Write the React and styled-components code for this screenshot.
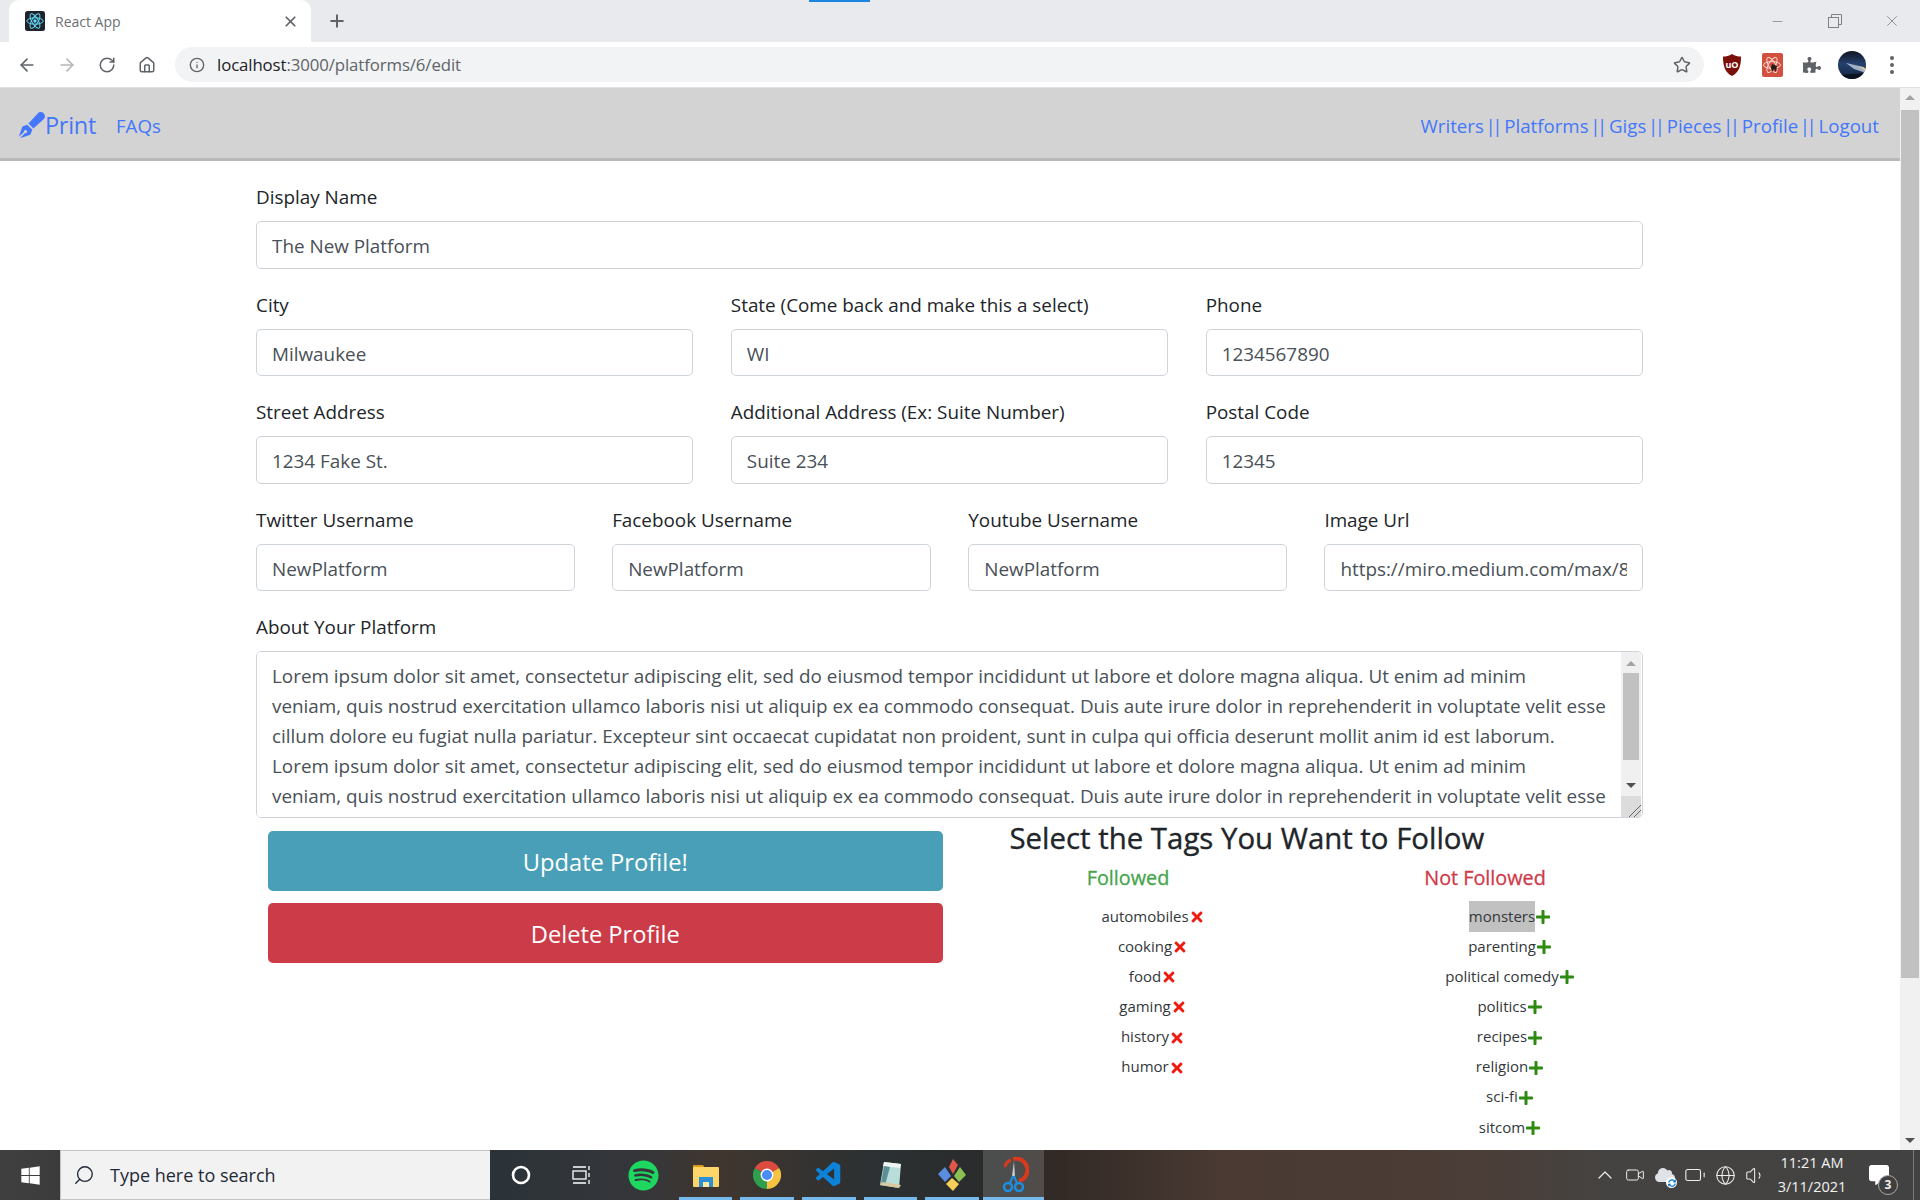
import React from "react";
import styled, { createGlobalStyle } from "styled-components";
import { ArrowLeft, ArrowRight, RotateCw, Home, Info, Star, Plus, X, Minus, Search, ChevronUp, Battery, Globe, Volume1, Video } from "lucide-react";
import { FaPenFancy, FaTimes, FaPlus, FaPuzzlePiece, FaWindows, FaSpotify, FaCloud, FaSyncAlt, FaCommentAlt } from "react-icons/fa";
import { VscVscode } from "react-icons/vsc";

const SANS = `"Open Sans", "Noto Sans", sans-serif`;

const Global = createGlobalStyle`
  html, body { margin: 0; padding: 0; background: #fff; }
  * { box-sizing: border-box; }
  body { font-family: ${SANS}; }
`;

const Screen = styled.div`
  position: relative;
  width: 1920px;
  height: 1200px;
  overflow: hidden;
  display: flex;
  flex-direction: column;
  background: #fff;
`;

/* Browser chrome */
const TabStrip = styled.div`
  position: relative;
  height: 42px;
  flex: none;
  background: #e8eaed;
  display: flex;
  align-items: flex-end;
  padding-left: 9px;
`;
const LoadBar = styled.div`
  position: absolute;
  top: 0;
  left: 809px;
  width: 61px;
  height: 2px;
  background: #1a86e0;
`;
const Tab = styled.div`
  width: 302px;
  height: 42px;
  background: #fff;
  border-radius: 10px 10px 0 0;
  display: flex;
  align-items: center;
  padding: 0 12px 0 16px;
  gap: 10px;
  color: #5f6368;
`;
const TabTitle = styled.span`
  flex: 1;
  font-size: 14px;
  color: #6b6f73;
`;
const NewTab = styled.div`
  width: 52px;
  height: 42px;
  display: flex;
  align-items: center;
  justify-content: center;
  color: #5f6368;
`;
const WindowControls = styled.div`
  margin-left: auto;
  height: 42px;
  display: flex;
  align-items: center;
  color: #7f8184;
`;
const WinBtn = styled.div`
  width: 57px;
  height: 42px;
  display: flex;
  align-items: center;
  justify-content: center;
`;
const Toolbar = styled.div`
  height: 46px;
  flex: none;
  background: #fff;
  border-bottom: 1px solid #dfe1e5;
  display: flex;
  align-items: center;
  padding: 0 8px 0 7px;
`;
const ToolBtn = styled.div`
  width: 40px;
  height: 36px;
  flex: none;
  display: flex;
  align-items: center;
  justify-content: center;
  color: ${p => (p.$dim ? "#b4b6b9" : "#5f6368")};
`;
const Address = styled.div`
  flex: 1;
  height: 35px;
  margin: 0 8px;
  border-radius: 18px;
  background: #f1f3f4;
  display: flex;
  align-items: center;
  padding: 0 13px 0 14px;
  color: #5f6368;
  gap: 12px;
`;
const Url = styled.div`
  flex: 1;
  font-size: 16.8px;
  color: #5f6368;
  letter-spacing: -0.1px;
  & b { font-weight: 400; color: #202124; }
`;

/* Viewport */
const Viewport = styled.div`
  flex: 1;
  min-height: 0;
  display: flex;
`;
const Page = styled.div`
  flex: 1;
  min-width: 0;
  overflow: hidden;
`;
const Navbar = styled.nav`
  height: 73px;
  background: #d3d3d3;
  border-bottom: 3px solid #b9b9b9;
  display: flex;
  align-items: center;
  padding: 4px 21px 0 19px;
  font-size: 18.7px;
  color: #4477fb;
`;
const Brand = styled.div`
  display: flex;
  align-items: center;
  font-size: 23.5px;
  letter-spacing: -0.3px;
  margin-right: 20px;
`;
const NavLinks = styled.div`
  margin-left: auto;
  word-spacing: -3.2px;
`;
const Pipes = styled.span`
  letter-spacing: -3.5px;
  margin-right: 3.5px;
`;
const Container = styled.main`
  width: 1387px;
  margin: 20px 0 0 256px;
  color: #212529;
  font-size: 18.87px;
`;
const Row = styled.div`
  display: grid;
  grid-template-columns: repeat(${p => p.$cols}, 1fr);
  column-gap: 37.5px;
`;
const Group = styled.div`
  margin-bottom: 20px;
  min-width: 0;
`;
const Label = styled.label`
  display: block;
  padding-top: 1px;
  line-height: 30px;
  margin-bottom: 9px;
`;
const Input = styled.input`
  display: block;
  width: 100%;
  height: 47.5px;
  border: 1.25px solid #ced4da;
  border-radius: 5px;
  padding: 3px 15px 0;
  font: inherit;
  color: #495057;
  background: #fff;
  outline: none;
`;
const AreaWrap = styled.div`
  position: relative;
  height: 167px;
  border: 1.25px solid #ced4da;
  border-radius: 5px;
  overflow: hidden;
`;
const Area = styled.textarea`
  display: block;
  width: 100%;
  height: 100%;
  border: 0;
  outline: none;
  resize: none;
  overflow: hidden;
  white-space: pre;
  padding: 9px 15px;
  font: inherit;
  line-height: 30px;
  color: #495057;
`;
const MiniScroll = styled.div`
  position: absolute;
  top: 0;
  right: 1px;
  bottom: 0;
  width: 20px;
  background: #f0f0f0;
`;
const Thumb = styled.div`
  position: absolute;
  left: ${p => p.$inset}px;
  right: ${p => p.$inset}px;
  top: ${p => p.$top}px;
  height: ${p => p.$h}px;
  background: #c1c1c1;
`;
const Arrow = styled.div`
  position: absolute;
  left: 50%;
  margin-left: -5px;
  top: ${p => p.$top}px;
  width: 0;
  height: 0;
  border-left: 5px solid transparent;
  border-right: 5px solid transparent;
  ${p => p.$down
    ? `border-top: 5px solid ${p.$dark ? "#505050" : "#a3a3a3"};`
    : `border-bottom: 5px solid #a3a3a3;`}
`;
const Resizer = styled.div`
  position: absolute;
  right: 0;
  bottom: 0;
  width: 20px;
  height: 21px;
  background: linear-gradient(135deg, #dcdcdc 0 70%, #666 70% 72%, #dcdcdc 72% 82%, #666 82% 84%, #dcdcdc 84%);
`;
const Lower = styled.div`
  display: grid;
  grid-template-columns: 693.5px 693.5px;
`;
const ActionCol = styled.div`
  padding: 13px 7px 0 12px;
  display: flex;
  flex-direction: column;
  gap: 12px;
`;
const ActionBtn = styled.button`
  height: 60px;
  width: 100%;
  border: 0;
  border-radius: 5px;
  padding: 2px 0 0;
  background: ${p => p.$bg};
  color: #fff;
  font-family: ${SANS};
  font-size: 23.7px;
`;
const TagsCol = styled.div``;
const TagsTitle = styled.h3`
  margin: 0;
  padding-left: 60px;
  font-weight: 400;
  -webkit-text-stroke: 0.35px currentColor;
  font-size: 29.4px;
  line-height: 40px;
  white-space: nowrap;
  color: #212529;
`;
const TagCols = styled.div`
  display: grid;
  grid-template-columns: 357px 357px;
  margin-top: 4px;
`;
const TagCol = styled.div`
  text-align: center;
`;
const TagHead = styled.div`
  font-size: 19.8px;
  font-weight: 400;
  -webkit-text-stroke: 0.3px currentColor;
  line-height: 32px;
  color: ${p => p.$color};
`;
const TagList = styled.ul`
  list-style: none;
  margin: 7px 0 0;
  padding: 0 0 0 50px;
`;
const TagItem = styled.li`
  height: 30.15px;
  line-height: 30px;
  font-size: 15px;
  color: #33373b;
  white-space: nowrap;
  display: flex;
  justify-content: center;
  align-items: center;
`;
const TagName = styled.span`
  display: inline-block;
  line-height: 31px;
  background: ${p => (p.$hl ? "#c1c1c1" : "transparent")};
`;
const TagRemove = styled(FaTimes)`
  color: #ee1c10;
  font-size: 16px;
  margin-top: 2px;
`;
const TagAdd = styled(FaPlus)`
  color: #2f8a12;
  font-size: 16px;
  margin-top: 2px;
`;

/* Right page scrollbar */
const PageScroll = styled.div`
  position: relative;
  width: 20px;
  flex: none;
  background: #f1f1f1;
`;

/* Taskbar */
const Taskbar = styled.footer`
  height: 50px;
  flex: none;
  display: flex;
  align-items: stretch;
  background: linear-gradient(90deg, #404040 0, #3b3b3b 60px, #2b3338 490px, #35363a 640px, #40362f 720px, #2b3032 880px, #2a2b2b 1000px, #332a26 1060px, #4a3a33 1230px, #4b3d37 1480px, #454341 1600px, #424242 100%);
  color: #fff;
`;
const StartBtn = styled.div`
  width: 60px;
  display: flex;
  align-items: center;
  justify-content: center;
`;
const SearchBox = styled.div`
  width: 430px;
  background: #f2f2f2;
  border: 1px solid #c4c4c4;
  border-right: 0;
  display: flex;
  align-items: center;
  padding-left: 12px;
  gap: 15px;
  color: #1f2a36;
  font-size: 18px;
`;
const SearchGlyph = styled(Search)`
  transform: scaleX(-1);
`;
const TaskIcons = styled.div`
  display: flex;
`;
const TaskIcon = styled.div`
  position: relative;
  width: 61.6px;
  display: flex;
  align-items: center;
  justify-content: center;
  background: ${p => (p.$active ? "rgba(255,255,255,.16)" : "transparent")};
  &::after {
    content: "";
    display: ${p => (p.$open ? "block" : "none")};
    position: absolute;
    left: ${p => (p.$active ? 0 : 4)}px;
    right: ${p => (p.$active ? 0 : 4)}px;
    bottom: 0;
    height: 3px;
    background: #76b9ed;
  }
`;
const Tray = styled.div`
  margin-left: auto;
  display: flex;
  align-items: center;
  padding-right: 6px;
`;
const TrayIcon = styled.div`
  width: 30px;
  display: flex;
  justify-content: center;
  align-items: center;
  position: relative;
  color: #eee;
`;
const Clock = styled.div`
  width: 80px;
  margin-left: 2px;
  text-align: center;
  font-size: 14.5px;
  line-height: 24px;
  color: #f2f2f2;
`;
const Notify = styled.div`
  position: relative;
  width: 62px;
  height: 50px;
  display: flex;
  align-items: center;
  justify-content: center;
  padding-right: 8px;
  border-right: 1px solid #7a7a7a;
`;
const Badge = styled.div`
  position: absolute;
  left: 26px;
  top: 25px;
  width: 20px;
  height: 20px;
  border-radius: 50%;
  background: #3f3f3f;
  border: 1px solid #aaa;
  font-size: 12px;
  font-weight: 700;
  line-height: 18px;
  text-align: center;
  color: #eee;
`;
const SyncDot = styled.span`
  position: absolute;
  right: 3px;
  bottom: -3px;
  width: 11px;
  height: 11px;
  border-radius: 50%;
  background: #fff;
  display: flex;
  align-items: center;
  justify-content: center;
  color: #0a78d4;
`;

const ReactFav = () => (
  <svg width="20" height="20" viewBox="0 0 20 20">
    <rect width="20" height="20" rx="2.5" fill="#20232a" />
    <g fill="none" stroke="#61dafb" strokeWidth="1">
      <ellipse cx="10" cy="10" rx="8.2" ry="3.2" />
      <ellipse cx="10" cy="10" rx="8.2" ry="3.2" transform="rotate(60 10 10)" />
      <ellipse cx="10" cy="10" rx="8.2" ry="3.2" transform="rotate(120 10 10)" />
    </g>
    <circle cx="10" cy="10" r="1.7" fill="#61dafb" />
  </svg>
);
const RestoreIcon = () => (
  <svg width="14" height="14" viewBox="0 0 14 14" fill="none" stroke="currentColor">
    <rect x="0.5" y="3.5" width="10" height="10" />
    <path d="M3.5 3.5V.5h10v10h-3" />
  </svg>
);
const UBlock = () => (
  <svg width="20" height="24" viewBox="0 0 20 24">
    <path d="M10 1c3 2 6 2.500 9 2.500 0 9-1.500 15.500-9 19.500C2.500 19 1 12.500 1 3.500 4 3.500 7 3 10 1z" fill="#7b0f0a" />
    <text x="10" y="15" textAnchor="middle" fontSize="9" fontWeight="700" fill="#fff" fontFamily="Open Sans, sans-serif">uO</text>
  </svg>
);
const ReactDevRed = () => (
  <svg width="21" height="24" viewBox="0 0 21 24">
    <rect width="21" height="24" rx="2" fill="#d2503f" />
    <g fill="none" stroke="#f5d7cf" strokeWidth="1">
      <ellipse cx="10" cy="12" rx="8.500" ry="3.400" />
      <ellipse cx="10" cy="12" rx="8.500" ry="3.400" transform="rotate(60 10 12)" />
      <ellipse cx="10" cy="12" rx="8.500" ry="3.400" transform="rotate(120 10 12)" />
    </g>
    <path d="M10 11l5 2-1 6-2-3-2 3-1-4z" fill="#2a1a18" />
  </svg>
);
const Avatar = () => (
  <svg width="28" height="28" viewBox="0 0 28 28">
    <defs>
      <clipPath id="avc"><circle cx="14" cy="14" r="14" /></clipPath>
      <linearGradient id="avg" x1="0" y1="0" x2="0" y2="1">
        <stop offset="0" stopColor="#10151f" />
        <stop offset="0.45" stopColor="#24406e" />
        <stop offset="1" stopColor="#142440" />
      </linearGradient>
    </defs>
    <g clipPath="url(#avc)">
      <rect width="28" height="28" fill="url(#avg)" />
      <path d="M8 12l18 4 2 6-12-4z" fill="#9db0c6" />
      <path d="M20 15l7 2v3z" fill="#d9c89a" />
      <path d="M0 24l28-2v6H0z" fill="#0b1220" />
    </g>
  </svg>
);
const Cortana = () => (
  <svg width="20" height="20" viewBox="0 0 20 20">
    <circle cx="10" cy="10" r="8" fill="none" stroke="#fff" strokeWidth="2.600" />
  </svg>
);
const TaskView = () => (
  <svg width="22" height="20" viewBox="0 0 22 20" fill="none" stroke="#fff" strokeWidth="1.300">
    <path d="M2 2h13M2 18h13M18 1v4M18 8v4M18 15v4" />
    <rect x="2" y="6" width="13" height="8" />
  </svg>
);
const Folder = () => (
  <svg width="28" height="28" viewBox="0 0 28 28">
    <path d="M1 4h10l2 3H1z" fill="#d99a1c" />
    <rect x="1" y="6" width="26" height="20" rx="1" fill="#fcd669" />
    <rect x="7" y="16" width="14" height="10" fill="#2d8fd5" />
    <rect x="11" y="21" width="6" height="5" fill="#ffe9a0" />
  </svg>
);
const ChromeLogo = () => (
  <svg width="28" height="28" viewBox="0 0 24 24">
    <path d="M12 12L1.600 6A12 12 0 0 1 22.400 6Z" fill="#dd4b3e" />
    <path d="M12 12L22.400 6A12 12 0 0 1 12 24Z" fill="#f5c242" />
    <path d="M12 12L12 24A12 12 0 0 1 1.600 6Z" fill="#2f9e4f" />
    <circle cx="12" cy="12" r="5.500" fill="#fff" />
    <circle cx="12" cy="12" r="4.300" fill="#4a8bf5" />
  </svg>
);
const Notes = () => (
  <svg width="28" height="32" viewBox="0 0 28 32">
    <path d="M8 3l17 2-2 24-19-3z" fill="#b9ddd8" />
    <path d="M8 3l17 2-1 4-17-2z" fill="#eef6f4" />
    <path d="M5 24L8 7l6 1-5 18z" fill="#5c8f96" />
    <path d="M4 26l19 3 2-3-19-3z" fill="#d8c7a0" />
  </svg>
);
const Kraken = () => (
  <svg width="32" height="34" viewBox="0 0 32 34">
    <path d="M17 1l5 6-5 9-4-7z" fill="#e2574c" />
    <path d="M9 9l6 9-6 6-7-8z" fill="#5a8de0" />
    <path d="M24 9l6 8-7 7-5-6z" fill="#8cc152" />
    <path d="M16 20l7 6-6 7-7-7z" fill="#f6cf57" />
  </svg>
);
const Snip = () => (
  <svg width="30" height="36" viewBox="0 0 30 36" fill="none">
    <path d="M14 2a11 11 0 0 1 6 22" stroke="#d9391c" strokeWidth="4" />
    <path d="M12 3a9 9 0 0 0-6 7" stroke="#d9391c" strokeWidth="3" />
    <path d="M15 4l-2 15 3 0z" fill="#c9ccd0" />
    <circle cx="9" cy="30" r="4" stroke="#1d8fe0" strokeWidth="2.500" />
    <circle cx="20" cy="30" r="4" stroke="#1d8fe0" strokeWidth="2.500" />
    <path d="M11 26l3-7M18 26l-3-7" stroke="#1d8fe0" strokeWidth="2" />
  </svg>
);

const LOREM = [
  "Lorem ipsum dolor sit amet, consectetur adipiscing elit, sed do eiusmod tempor incididunt ut labore et dolore magna aliqua. Ut enim ad minim",
  "veniam, quis nostrud exercitation ullamco laboris nisi ut aliquip ex ea commodo consequat. Duis aute irure dolor in reprehenderit in voluptate velit esse",
  "cillum dolore eu fugiat nulla pariatur. Excepteur sint occaecat cupidatat non proident, sunt in culpa qui officia deserunt mollit anim id est laborum.",
  "Lorem ipsum dolor sit amet, consectetur adipiscing elit, sed do eiusmod tempor incididunt ut labore et dolore magna aliqua. Ut enim ad minim",
  "veniam, quis nostrud exercitation ullamco laboris nisi ut aliquip ex ea commodo consequat. Duis aute irure dolor in reprehenderit in voluptate velit esse",
].join("\n");

const FOLLOWED = ["automobiles", "cooking", "food", "gaming", "history", "humor"];
const NOT_FOLLOWED = ["monsters", "parenting", "political comedy", "politics", "recipes", "religion", "sci-fi", "sitcom"];
const NAV_LINKS = ["Writers", "Platforms", "Gigs", "Pieces", "Profile", "Logout"];

const Field = ({ label, value }) => (
  <Group>
    <Label>{label}</Label>
    <Input readOnly value={value} />
  </Group>
);

export default function App() {
  return (
    <Screen>
      <Global />
      <TabStrip>
        <LoadBar />
        <Tab>
          <ReactFav />
          <TabTitle>React App</TabTitle>
          <X size={17} strokeWidth={2.4} />
        </Tab>
        <NewTab><Plus size={20} strokeWidth={2.4} /></NewTab>
        <WindowControls>
          <WinBtn><Minus size={15} strokeWidth={1.2} /></WinBtn>
          <WinBtn><RestoreIcon /></WinBtn>
          <WinBtn><X size={18} strokeWidth={1.1} /></WinBtn>
        </WindowControls>
      </TabStrip>
      <Toolbar>
        <ToolBtn><ArrowLeft size={20} /></ToolBtn>
        <ToolBtn $dim><ArrowRight size={20} /></ToolBtn>
        <ToolBtn><RotateCw size={18} /></ToolBtn>
        <ToolBtn><Home size={18} /></ToolBtn>
        <Address>
          <Info size={16} />
          <Url><b>localhost</b>:3000/platforms/6/edit</Url>
          <Star size={18} />
        </Address>
        <ToolBtn><UBlock /></ToolBtn>
        <ToolBtn><ReactDevRed /></ToolBtn>
        <ToolBtn><FaPuzzlePiece size={18} /></ToolBtn>
        <ToolBtn><Avatar /></ToolBtn>
        <ToolBtn>
          <svg width="6" height="20" viewBox="0 0 6 20" fill="currentColor">
            <circle cx="3" cy="3" r="2" /><circle cx="3" cy="10" r="2" /><circle cx="3" cy="17" r="2" />
          </svg>
        </ToolBtn>
      </Toolbar>
      <Viewport>
        <Page>
          <Navbar>
            <Brand><FaPenFancy size={26} />Print</Brand>
            <span>FAQs</span>
            <NavLinks>
              {NAV_LINKS.map((l, i) => (
                <React.Fragment key={l}>
                  {i > 0 && <> <Pipes>||</Pipes> </>}
                  {l}
                </React.Fragment>
              ))}
            </NavLinks>
          </Navbar>
          <Container>
            <Field label="Display Name" value="The New Platform" />
            <Row $cols={3}>
              <Field label="City" value="Milwaukee" />
              <Field label="State (Come back and make this a select)" value="WI" />
              <Field label="Phone" value="1234567890" />
            </Row>
            <Row $cols={3}>
              <Field label="Street Address" value="1234 Fake St." />
              <Field label="Additional Address (Ex: Suite Number)" value="Suite 234" />
              <Field label="Postal Code" value="12345" />
            </Row>
            <Row $cols={4}>
              <Field label="Twitter Username" value="NewPlatform" />
              <Field label="Facebook Username" value="NewPlatform" />
              <Field label="Youtube Username" value="NewPlatform" />
              <Field label="Image Url" value="https://miro.medium.com/max/800/1*platform-image.jpeg" />
            </Row>
            <div>
              <Label>About Your Platform</Label>
              <AreaWrap>
                <Area readOnly value={LOREM} />
                <MiniScroll>
                  <Arrow $top={9} />
                  <Thumb $inset={2} $top={21} $h={87} />
                  <Arrow $down $dark $top={131} />
                  <Resizer />
                </MiniScroll>
              </AreaWrap>
            </div>
            <Lower>
              <ActionCol>
                <ActionBtn $bg="#4a9fb8">Update Profile!</ActionBtn>
                <ActionBtn $bg="#cc3b48">Delete Profile</ActionBtn>
              </ActionCol>
              <TagsCol>
                <TagsTitle>Select the Tags You Want to Follow</TagsTitle>
                <TagCols>
                  <TagCol>
                    <TagHead $color="#45a54b">Followed</TagHead>
                    <TagList>
                      {FOLLOWED.map(t => (
                        <TagItem key={t}><TagName>{t}</TagName><TagRemove /></TagItem>
                      ))}
                    </TagList>
                  </TagCol>
                  <TagCol>
                    <TagHead $color="#cf3a4a">Not Followed</TagHead>
                    <TagList>
                      {NOT_FOLLOWED.map(t => (
                        <TagItem key={t}><TagName $hl={t === "monsters"}>{t}</TagName><TagAdd /></TagItem>
                      ))}
                    </TagList>
                  </TagCol>
                </TagCols>
              </TagsCol>
            </Lower>
          </Container>
        </Page>
        <PageScroll>
          <Arrow $top={7} />
          <Thumb $inset={1} $top={22} $h={868} />
          <Arrow $down $dark $top={1050} />
        </PageScroll>
      </Viewport>
      <Taskbar>
        <StartBtn><FaWindows size={21} color="#fff" /></StartBtn>
        <SearchBox>
          <SearchGlyph size={22} strokeWidth={1.5} />
          Type here to search
        </SearchBox>
        <TaskIcons>
          <TaskIcon><Cortana /></TaskIcon>
          <TaskIcon><TaskView /></TaskIcon>
          <TaskIcon><FaSpotify size={31} color="#1ed760" /></TaskIcon>
          <TaskIcon $open><Folder /></TaskIcon>
          <TaskIcon $open><ChromeLogo /></TaskIcon>
          <TaskIcon $open><VscVscode size={30} color="#0d82d9" /></TaskIcon>
          <TaskIcon $open><Notes /></TaskIcon>
          <TaskIcon $open><Kraken /></TaskIcon>
          <TaskIcon $open $active><Snip /></TaskIcon>
        </TaskIcons>
        <Tray>
          <TrayIcon><ChevronUp size={24} strokeWidth={1.2} /></TrayIcon>
          <TrayIcon><Video size={20} strokeWidth={1.2} /></TrayIcon>
          <TrayIcon><FaCloud size={20} color="#dfe3e8" /><SyncDot><FaSyncAlt size={8} /></SyncDot></TrayIcon>
          <TrayIcon><Battery size={22} strokeWidth={1.2} /></TrayIcon>
          <TrayIcon><Globe size={21} strokeWidth={1.2} /></TrayIcon>
          <TrayIcon><Volume1 size={21} strokeWidth={1.2} /></TrayIcon>
          <Clock>11:21 AM<br />3/11/2021</Clock>
          <Notify>
            <FaCommentAlt size={20} color="#fff" />
            <Badge>3</Badge>
          </Notify>
        </Tray>
      </Taskbar>
    </Screen>
  );
}
